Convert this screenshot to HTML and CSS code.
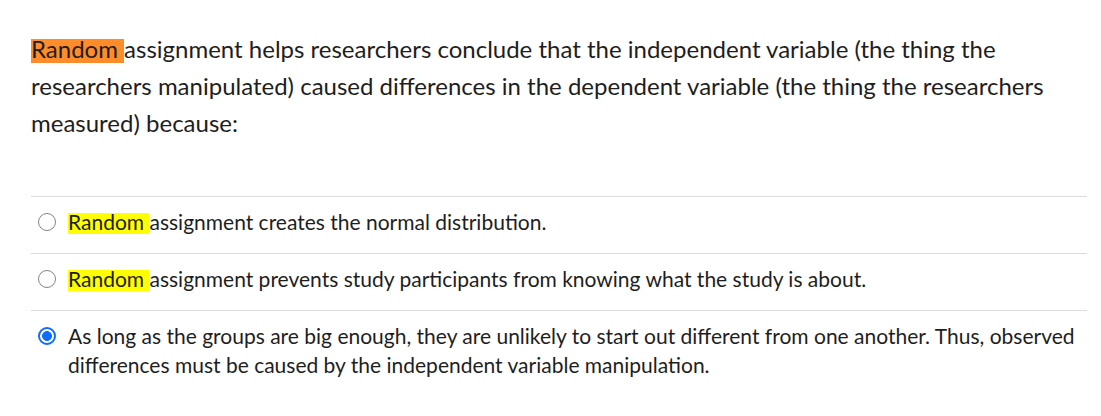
FILE: index.html
```html
<!DOCTYPE html>
<html>
<head>
<meta charset="utf-8">
<link rel="stylesheet" href="styles.css">
</head>
<body>
<div class="quiz">
  <p class="question"><span class="hl hl-orange">Random </span>assignment helps researchers conclude that the independent variable (the thing the researchers manipulated) caused differences in the dependent variable (the thing the researchers measured) because:</p>
  <div class="answers">
    <label class="answer">
      <span class="radio"></span>
      <span class="text"><span class="hl hl-yellow">Random </span>assignment creates the normal distribution.</span>
    </label>
    <label class="answer">
      <span class="radio"></span>
      <span class="text"><span class="hl hl-yellow">Random </span>assignment prevents study participants from knowing what the study is about.</span>
    </label>
    <label class="answer">
      <span class="radio checked"></span>
      <span class="text">As long as the groups are big enough, they are unlikely to start out different from one another. Thus, observed differences must be caused by the independent variable manipulation.</span>
    </label>
  </div>
</div>
</body>
</html>
```

FILE: styles.css
```css
html, body {
  margin: 0;
  padding: 0;
  background: #fff;
}
body {
  font-family: Lato, "Liberation Sans", sans-serif;
  color: #1e1e1e;
}
.quiz {
  padding: 30px 14px 0 31px;
}
.question {
  margin: 0;
  font-size: 24px;
  line-height: 37px;
}
.hl {
  background-repeat: no-repeat;
  background-size: 100% 1em;
  background-position: 0 0.2em;
}
.hl-orange {
  background-image: linear-gradient(#ff8c2a, #ff8c2a);
}
.hl-yellow {
  background-image: linear-gradient(#ffff00, #ffff00);
}
.answers {
  margin-top: 55px;
  border-top: 1px solid #dcdcdc;
}
.answer {
  display: flex;
  align-items: flex-start;
  gap: 12px;
  padding: 10px 0 17px 7px;
  border-bottom: 1px solid #dcdcdc;
  font-size: 21px;
  line-height: 29px;
}
.answer:last-child {
  border-bottom: none;
}
.radio {
  flex: none;
  box-sizing: border-box;
  width: 18px;
  height: 18px;
  margin-top: 6px;
  border: 1.5px solid #858585;
  border-radius: 50%;
  background: #fff;
}
.radio.checked {
  border: 2px solid #0d6efd;
  background: radial-gradient(circle, #0d6efd 0 4.6px, #fff 5.2px);
}
```
